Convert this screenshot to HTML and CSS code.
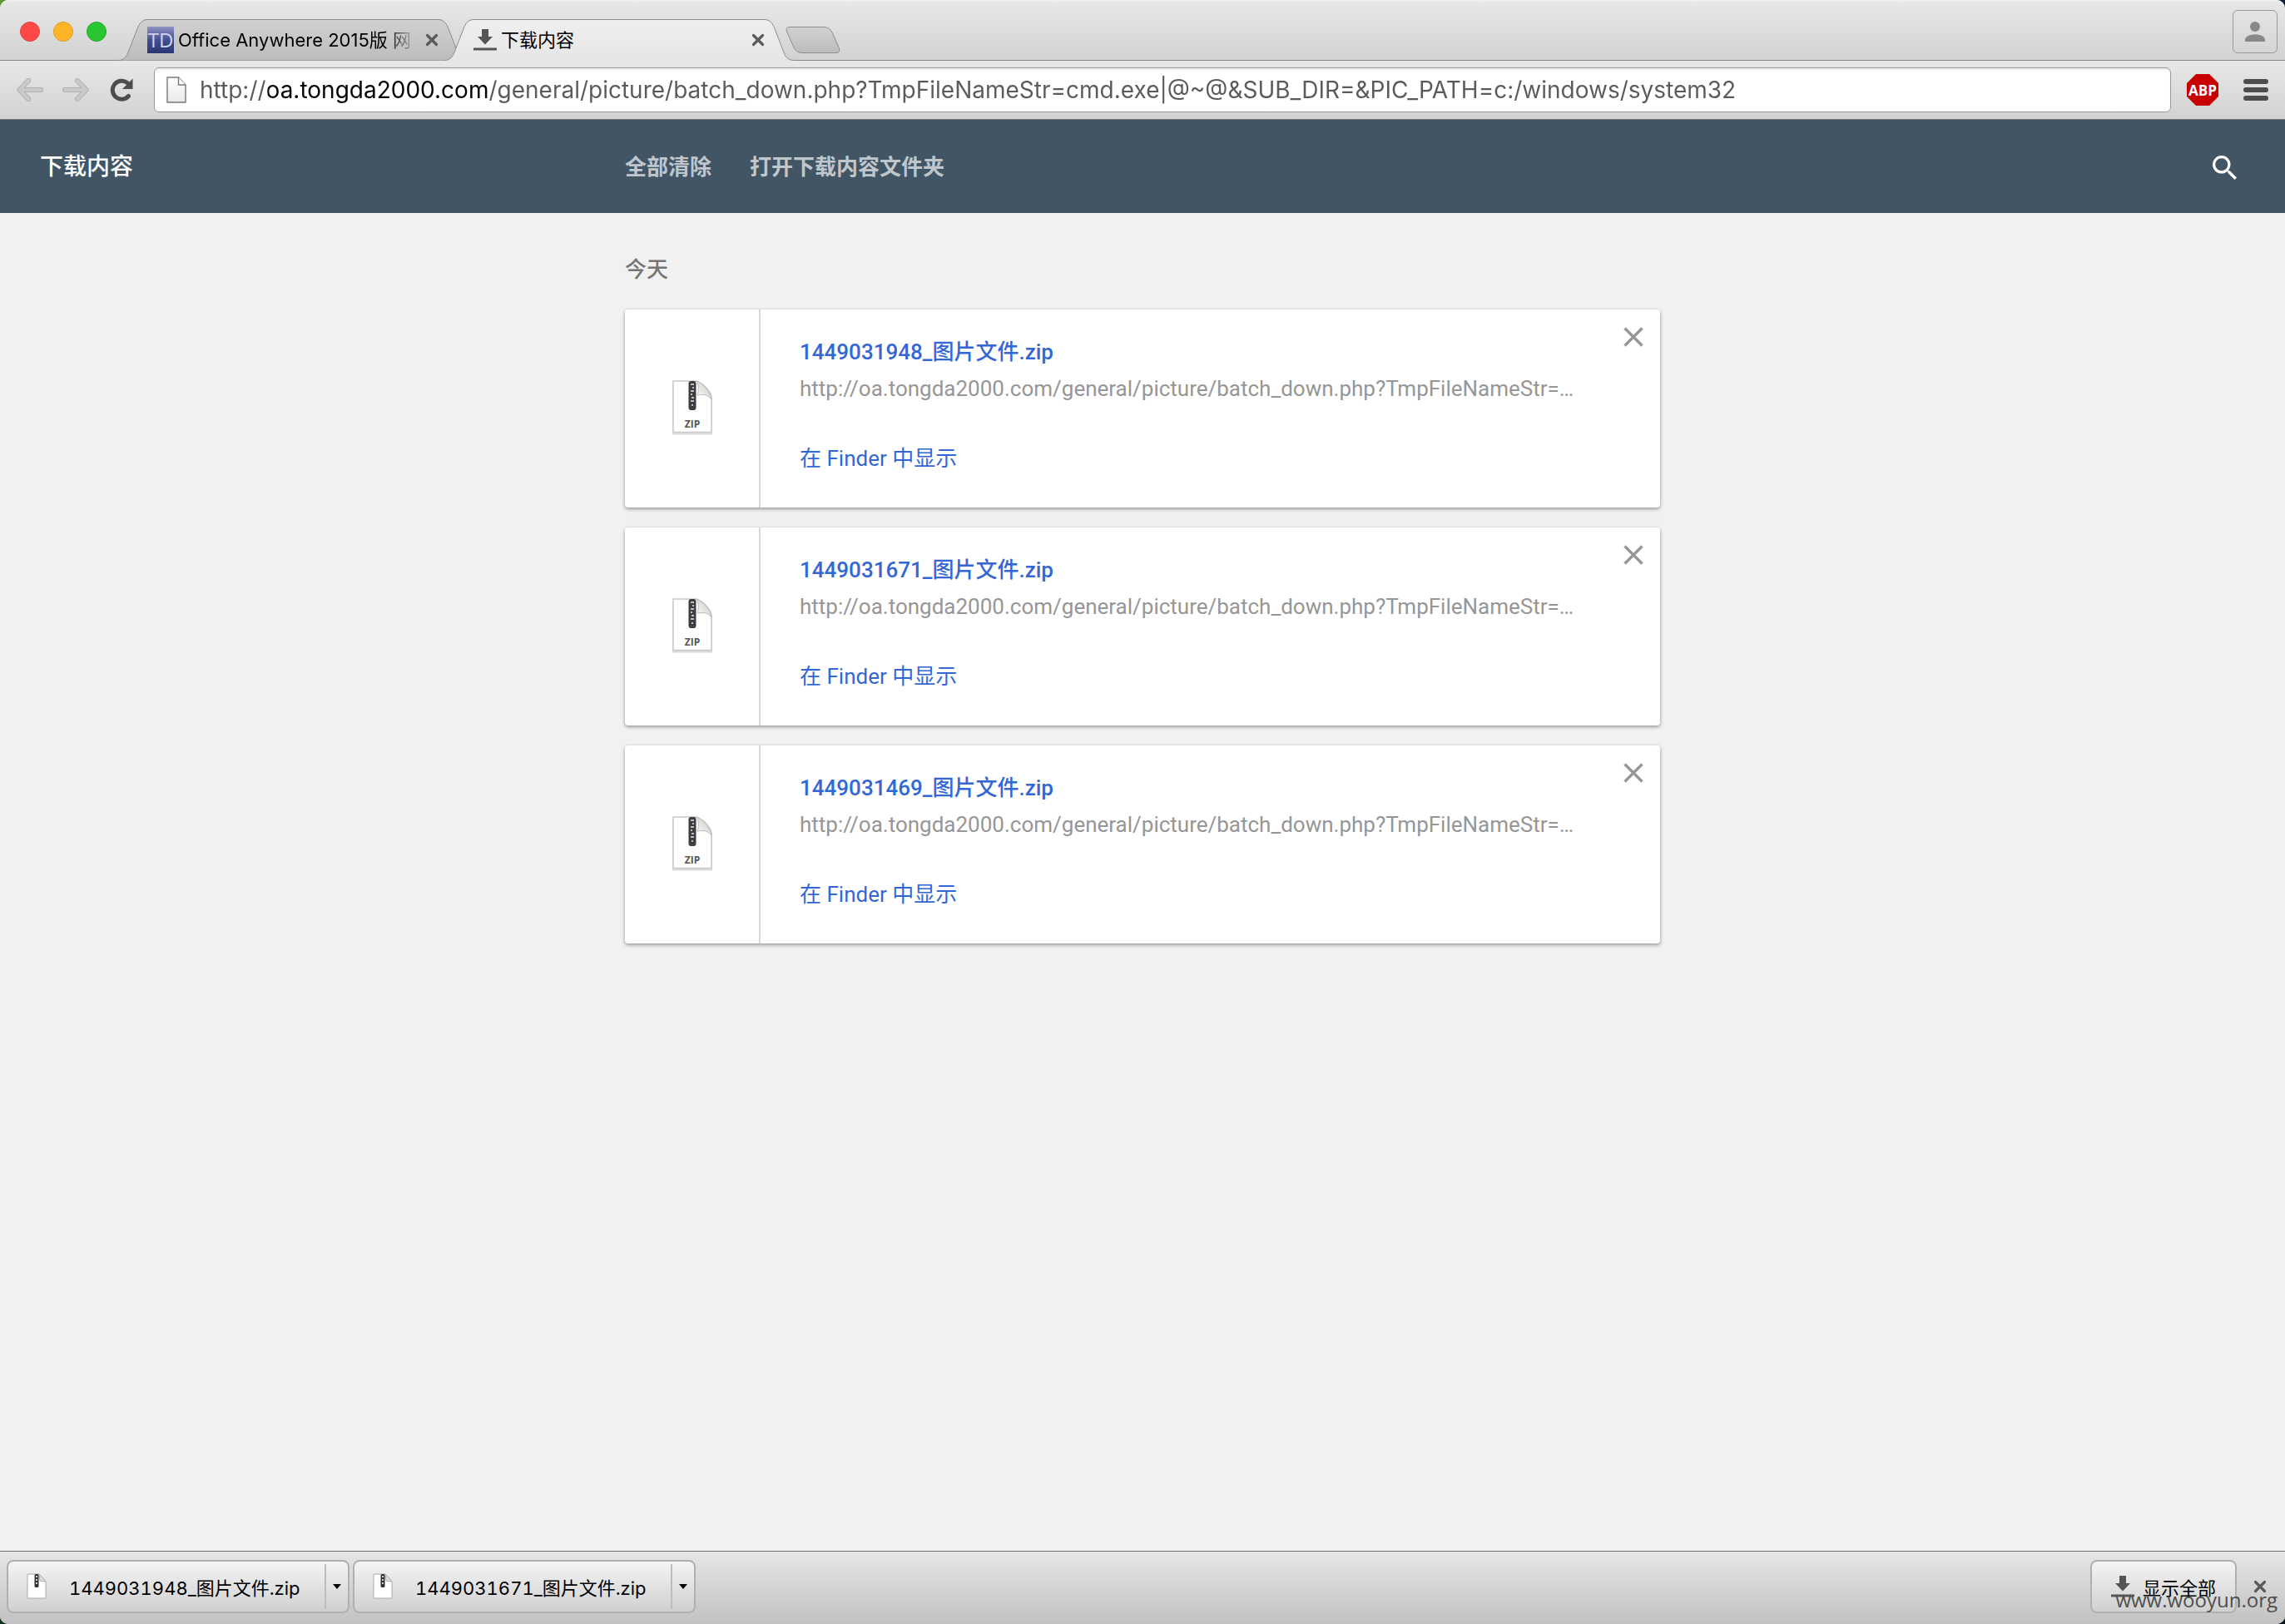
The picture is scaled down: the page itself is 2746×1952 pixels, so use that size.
FILE: index.html
```html
<!DOCTYPE html>
<html lang="zh-CN">
<head>
<meta charset="utf-8">
<title>下载内容</title>
<link rel="stylesheet" href="styles.css">
</head>
<body>
<svg class="defs" aria-hidden="true">
  <defs>
    <linearGradient id="tab-idle" x1="0" y1="0" x2="0" y2="1"><stop offset="0" stop-color="#d1d1d2"/><stop offset="1" stop-color="#bcbcbd"/></linearGradient>
    <linearGradient id="tab-on" x1="0" y1="0" x2="0" y2="1"><stop offset="0" stop-color="#efefef"/><stop offset="1" stop-color="#e6e6e6"/></linearGradient>
    <linearGradient id="paper" x1="0" y1="0" x2="0" y2="1"><stop offset="0" stop-color="#ffffff"/><stop offset="1" stop-color="#e9e9e9"/></linearGradient>
    <linearGradient id="fold" x1="0" y1="1" x2="1" y2="0"><stop offset="0" stop-color="#ffffff"/><stop offset="1" stop-color="#c4c4c4"/></linearGradient>
    <symbol id="close-small" viewBox="0 0 16 16"><path d="M2.500 2.500l11 11M13.500 2.500l-11 11" fill="none" stroke="#5a5a5a" stroke-width="3.200" stroke-linecap="round"/></symbol>
    <symbol id="download" viewBox="0 0 28 26"><path d="M10 0h8v9h5l-9 9.500L5 9h5zM0 22.500h28v3H0z" fill="#555"/></symbol>
    <symbol id="remove" viewBox="0 0 24 24"><path d="M1.500 1.500l21 21M22.500 1.500l-21 21" fill="none" stroke="#969696" stroke-width="3.200"/></symbol>
    <symbol id="zip-file" viewBox="0 0 56 72">
      <path d="M4 6h30l18 17v44.500H4z" fill="#000" opacity=".14"/>
      <path d="M5 3h28c8 3 17 12 18 19v42.500H5z" fill="#fff" stroke="#c9c9c9" stroke-width="1.500"/>
      <path d="M33 3c3 5 3 11 1 17 6-1 13-1 17 5-1-9-10-19-18-22z" fill="url(#fold)" stroke="#bbb"/>
      <rect x="23.500" y="3" width="9" height="35" rx="3" fill="#3b3e42"/>
      <path d="M26 7h4m-2 4h2m-4 4h4m-4 4h2m-1 4h3m-4 4h4m-3 5h2" stroke="#b9c0c6" stroke-width="2" fill="none"/>
      <text class="zip-label" x="28" y="59" text-anchor="middle">ZIP</text>
    </symbol>
    <symbol id="zip-small" viewBox="0 0 26 34">
      <path d="M2 2h14l8 9v20H2z" fill="#fff" stroke="#aaa"/>
      <path d="M16 2l1 8 7 1z" fill="#e2e2e2" stroke="#aaa"/>
      <rect x="10.500" y="2" width="5" height="16" rx="1.500" fill="#333"/>
      <path d="M13 4v12" stroke="#ccc" stroke-dasharray="2 2" stroke-width="2"/>
    </symbol>
  </defs>
</svg>

<div class="window">
  <header class="tabstrip">
    <div class="lights">
      <button class="light light-close" aria-label="关闭"></button>
      <button class="light light-min" aria-label="最小化"></button>
      <button class="light light-max" aria-label="最大化"></button>
    </div>
    <nav class="tabs">
      <div class="tab">
        <svg class="tab-shape" viewBox="0 0 420 50"><path d="M0 49.500C7 49.500 10 45 12 40L24 9Q28 .5 35 .5H385Q392 .5 396 9L408 40Q411 49.500 420 49.500" fill="url(#tab-idle)" stroke="#8d8d8d"/></svg>
        <svg class="favicon" viewBox="0 0 32 32"><defs><linearGradient id="td" x1="0" y1="0" x2="0" y2="1"><stop offset="0" stop-color="#8f93c4"/><stop offset=".5" stop-color="#444f92"/><stop offset="1" stop-color="#2a3672"/></linearGradient></defs><rect width="32" height="32" fill="url(#td)"/><text class="td-label" x="16" y="25" text-anchor="middle">TD</text></svg>
        <a class="tab-title tab-title-fade" href="#">Office Anywhere 2015版 网</a>
        <button class="tab-close" aria-label="关闭标签页"><svg viewBox="0 0 16 16"><use href="#close-small"/></svg></button>
      </div>
      <div class="tab tab-active">
        <svg class="tab-shape" viewBox="0 0 420 50"><path d="M0 50V49.500C7 49.500 10 45 12 40L24 9Q28 .5 35 .5H385Q392 .5 396 9L408 40Q411 49.500 420 49.500V50z" fill="url(#tab-on)"/><path d="M0 49.500C7 49.500 10 45 12 40L24 9Q28 .5 35 .5H385Q392 .5 396 9L408 40Q411 49.500 420 49.500" fill="none" stroke="#8d8d8d"/></svg>
        <svg class="tab-icon" viewBox="0 0 28 26"><use href="#download"/></svg>
        <a class="tab-title" href="#">下载内容</a>
        <button class="tab-close" aria-label="关闭标签页"><svg viewBox="0 0 16 16"><use href="#close-small"/></svg></button>
      </div>
    </nav>
    <button class="new-tab" aria-label="新标签页"><svg viewBox="0 0 66 32"><path d="M5 .5H46Q53 .5 56 7L64.500 26Q66 31.500 61 31.500H20Q13 31.500 10 25L1.500 6Q0 .5 5 .5z" fill="url(#tab-idle)" stroke="#8d8d8d"/></svg></button>
    <button class="profile" aria-label="用户"><svg viewBox="0 0 24 24"><circle cx="12" cy="6" r="6" fill="#888"/><path d="M0 24v-2c0-4 5-6.500 12-6.500s12 2.500 12 6.500v2z" fill="#888"/></svg></button>
  </header>

  <div class="toolbar">
    <button class="nav-btn" aria-label="后退"><svg viewBox="0 0 32 28"><path d="M14 3L3.500 14 14 25M4 14h25" fill="none" stroke="#a9a9a9" stroke-width="6" stroke-linecap="round" stroke-linejoin="round"/><path d="M14 3L3.500 14 14 25M4 14h25" fill="none" stroke="#c9c9c9" stroke-width="4.500" stroke-linecap="round" stroke-linejoin="round"/></svg></button>
    <button class="nav-btn" aria-label="前进"><svg viewBox="0 0 32 28"><path d="M18 3l10.500 11L18 25M28 14H3" fill="none" stroke="#a9a9a9" stroke-width="6" stroke-linecap="round" stroke-linejoin="round"/><path d="M18 3l10.500 11L18 25M28 14H3" fill="none" stroke="#c9c9c9" stroke-width="4.500" stroke-linecap="round" stroke-linejoin="round"/></svg></button>
    <button class="nav-btn" aria-label="重新加载"><svg viewBox="-2 0 32 28"><path d="M22.500 21.500A11 11 0 1 1 21 5.500" fill="none" stroke="#4d4d4d" stroke-width="5" stroke-linecap="round"/><path d="M27.500 .5V13H15z" fill="#4d4d4d"/></svg></button>
    <label class="omnibox">
      <svg class="page-icon" viewBox="0 0 24 32"><path d="M1 1h13.500l8.500 9v21H1z" fill="url(#paper)" stroke="#777" stroke-width="1.400"/><path d="M14.500 1v9H23" fill="#fff" stroke="#777" stroke-width="1.400"/></svg>
      <input class="url" type="text" aria-label="地址" value="http://oa.tongda2000.com/general/picture/batch_down.php?TmpFileNameStr=cmd.exe|@~@&amp;SUB_DIR=&amp;PIC_PATH=c:/windows/system32">
    </label>
    <button class="abp" aria-label="Adblock Plus"><svg viewBox="0 0 38 38"><path d="M11 0h16l11 11v16L27 38H11L0 27V11z" fill="#c70000"/><text class="abp-label" x="19" y="26" text-anchor="middle">ABP</text></svg></button>
    <button class="menu" aria-label="菜单"><svg viewBox="0 0 30 26"><path d="M3 3h24M3 13h24M3 23h24" stroke="#4d4d4d" stroke-width="6" stroke-linecap="round"/></svg></button>
  </div>

  <div class="page-head">
    <h1 class="page-title">下载内容</h1>
    <div class="actions">
      <button class="action">全部清除</button>
      <button class="action">打开下载内容文件夹</button>
    </div>
    <button class="search" aria-label="搜索"><svg viewBox="3 3 17.500 17.500"><path fill="#fff" d="M15.500 14h-.79l-.28-.27A6.471 6.471 0 0 0 16 9.500 6.500 6.500 0 1 0 9.500 16c1.610 0 3.090-.59 4.230-1.570l.27.28v.79l5 4.990L20.490 19l-4.990-5zm-6 0C7.010 14 5 11.990 5 9.500S7.010 5 9.500 5 14 7.010 14 9.500 11.990 14 9.500 14z"/></svg></button>
  </div>

  <main class="content">
    <h2 class="day">今天</h2>
    <ul class="list">
      <li class="card">
        <div class="thumb"><svg viewBox="0 0 56 72"><use href="#zip-file"/></svg></div>
        <div class="info">
          <a class="name" href="#">1449031948_图片文件.zip</a>
          <a class="source" href="#">http://oa.tongda2000.com/general/picture/batch_down.php?TmpFileNameStr=…</a>
          <a class="show" href="#">在 Finder 中显示</a>
        </div>
        <button class="remove" aria-label="从列表中移除"><svg viewBox="0 0 24 24"><use href="#remove"/></svg></button>
      </li>
      <li class="card">
        <div class="thumb"><svg viewBox="0 0 56 72"><use href="#zip-file"/></svg></div>
        <div class="info">
          <a class="name" href="#">1449031671_图片文件.zip</a>
          <a class="source" href="#">http://oa.tongda2000.com/general/picture/batch_down.php?TmpFileNameStr=…</a>
          <a class="show" href="#">在 Finder 中显示</a>
        </div>
        <button class="remove" aria-label="从列表中移除"><svg viewBox="0 0 24 24"><use href="#remove"/></svg></button>
      </li>
      <li class="card">
        <div class="thumb"><svg viewBox="0 0 56 72"><use href="#zip-file"/></svg></div>
        <div class="info">
          <a class="name" href="#">1449031469_图片文件.zip</a>
          <a class="source" href="#">http://oa.tongda2000.com/general/picture/batch_down.php?TmpFileNameStr=…</a>
          <a class="show" href="#">在 Finder 中显示</a>
        </div>
        <button class="remove" aria-label="从列表中移除"><svg viewBox="0 0 24 24"><use href="#remove"/></svg></button>
      </li>
    </ul>
  </main>

  <footer class="shelf">
    <div class="shelf-item">
      <button class="shelf-file"><svg class="shelf-zip" viewBox="0 0 26 34"><use href="#zip-small"/></svg>1449031948_图片文件.zip</button>
      <button class="shelf-more" aria-label="更多操作"><svg viewBox="0 0 10 6"><path d="M0 0h10L5 6z"/></svg></button>
    </div>
    <div class="shelf-item">
      <button class="shelf-file"><svg class="shelf-zip" viewBox="0 0 26 34"><use href="#zip-small"/></svg>1449031671_图片文件.zip</button>
      <button class="shelf-more" aria-label="更多操作"><svg viewBox="0 0 10 6"><path d="M0 0h10L5 6z"/></svg></button>
    </div>
    <button class="show-all"><svg viewBox="0 0 28 26"><use href="#download"/></svg>显示全部</button>
    <button class="shelf-close" aria-label="关闭下载栏"><svg viewBox="0 0 16 16"><use href="#close-small"/></svg></button>
    <span class="watermark">www.wooyun.org</span>
  </footer>
</div>
</body>
</html>
```

FILE: styles.css
```css
* {
  box-sizing: border-box;
}

body {
  margin: 0;
  background: linear-gradient(to bottom, rgba(30, 70, 20, 0) 50%, rgba(0, 20, 20, 0.8) 100%), linear-gradient(to right, #5d9c39 0, #1d3c14 200px, #0c2238 100%);
  font-family: Inter, "Noto Sans CJK SC", sans-serif;
  font-size: 22px;
  color: #000;
}

button {
  display: flex;
  align-items: center;
  justify-content: center;
  flex: none;
  padding: 0;
  border: 0;
  background: none;
  font: inherit;
  color: inherit;
}

a {
  text-decoration: none;
  color: inherit;
}

svg {
  display: block;
  flex: none;
}

.defs {
  position: absolute;
  width: 0;
  height: 0;
}

.window {
  display: flex;
  flex-direction: column;
  min-height: 100vh;
  overflow: hidden;
  border-radius: 10px;
  background: #f1f1f1;
}

/* tab strip */

.tabstrip {
  display: flex;
  align-items: flex-end;
  height: 73px;
  border-bottom: 1px solid #868686;
  background: linear-gradient(#f4f4f4 0, #e7e7e7 3px, #d2d2d2 100%);
}

.lights {
  display: flex;
  gap: 16px;
  width: 142px;
  padding: 0 0 22px 24px;
}

.light {
  width: 24px;
  height: 24px;
  border: 1px solid;
  border-radius: 50%;
}

.light-close {
  background: #fd4a47;
  border-color: #e2403d;
}

.light-min {
  background: #fdb426;
  border-color: #de9c22;
}

.light-max {
  background: #29c631;
  border-color: #21a52a;
}

.tabs {
  display: flex;
  margin-bottom: -1px;
}

.tab {
  position: relative;
  display: flex;
  align-items: center;
  width: 420px;
  height: 50px;
  padding: 0 35px;
}

.tab > * {
  position: relative;
}

.tab > .tab-shape {
  position: absolute;
  inset: 0;
  width: 100%;
  height: 100%;
}

.tab-active {
  margin-left: -28px;
}

.favicon {
  width: 32px;
  height: 32px;
}

.td-label {
  font: 24px "Open Sans", sans-serif;
  fill: #cfd3ec;
}

.tab-icon {
  width: 28px;
  height: 26px;
}

.tab-title {
  flex: 1;
  min-width: 0;
  margin: 0 12px 0 5px;
  white-space: nowrap;
  line-height: 32px;
}

.tab-title-fade {
  -webkit-mask-image: linear-gradient(to right, #000 250px, transparent 286px);
  mask-image: linear-gradient(to right, #000 250px, transparent 286px);
}

.tab-close svg,
.shelf-close svg {
  width: 16px;
  height: 16px;
}

.new-tab {
  margin: 0 auto 8px -10px;
}

.new-tab svg {
  width: 66px;
  height: 32px;
}

.profile {
  width: 54px;
  height: 52px;
  margin: 0 9px 8px 0;
  border: 1px solid #9a9a9a;
  border-radius: 6px;
}

.profile svg {
  width: 24px;
  height: 24px;
}

/* toolbar */

.toolbar {
  display: flex;
  align-items: center;
  height: 71px;
  padding: 0 20px;
  border-bottom: 1px solid #777;
  background: linear-gradient(#e8e8e8, #d2d2d2);
}

.nav-btn {
  margin-right: 23px;
}

.nav-btn svg {
  width: 32px;
  height: 28px;
}

.omnibox {
  display: flex;
  flex: 1;
  align-items: center;
  gap: 16px;
  height: 54px;
  min-width: 0;
  padding: 0 14px;
  border: 1px solid #999;
  border-radius: 6px;
  background: #fff;
  box-shadow: inset 0 2px 1px #eee;
}

.page-icon {
  width: 24px;
  height: 32px;
}

.url {
  flex: 1;
  min-width: 0;
  padding: 0;
  border: 0;
  outline: 0;
  font: 28px/40px Inter, "Noto Sans CJK SC", sans-serif;
  color: transparent;
  background: linear-gradient(to right, #5a5a5a 82px, #000 82px 348px, #5a5a5a 348px);
  -webkit-background-clip: text;
  background-clip: text;
}

.abp {
  margin-left: 19px;
}

.abp svg {
  width: 38px;
  height: 38px;
}

.abp-label {
  font: bold 17px "Open Sans", sans-serif;
  fill: #fff;
}

.menu {
  margin-left: 30px;
}

.menu svg {
  width: 30px;
  height: 26px;
}

/* downloads page */

.page-head {
  display: grid;
  grid-template-columns: 1fr minmax(0, 1244px) 1fr;
  align-items: center;
  height: 112px;
  padding-top: 2px;
  background: #415564;
  font-family: Roboto, "Noto Sans CJK SC", sans-serif;
}

.page-title {
  margin: 0;
  padding-left: 48px;
  font-size: 28px;
  font-weight: 500;
  line-height: 40px;
  color: #fff;
}

.actions {
  display: flex;
  gap: 46px;
}

.action {
  font-size: 26px;
  font-weight: 700;
  line-height: 40px;
  color: #c0c7cc;
}

.search {
  justify-self: end;
  margin-right: 58px;
}

.search svg {
  width: 29px;
  height: 29px;
}

.content {
  flex: 1;
  width: 100%;
  max-width: 1244px;
  margin: 0 auto;
  font-family: Roboto, "Noto Sans CJK SC", sans-serif;
  font-size: 26px;
}

.day {
  margin: 48px 0 28px;
  font-size: 26px;
  font-weight: 500;
  line-height: 40px;
  color: #757575;
}

.list {
  display: flex;
  flex-direction: column;
  gap: 24px;
  margin: 0;
  padding: 0;
  list-style: none;
}

.card {
  position: relative;
  display: flex;
  height: 238px;
  border-radius: 4px;
  background: #fff;
  box-shadow: 0 2px 4px rgba(0, 0, 0, 0.35), 0 0 4px rgba(0, 0, 0, 0.06);
}

.thumb {
  display: flex;
  align-items: center;
  justify-content: center;
  width: 163px;
  border-right: 2px solid #d8d8d8;
}

.thumb svg {
  width: 56px;
  height: 72px;
}

.zip-label {
  font: bold 12px "Open Sans", sans-serif;
  fill: #555;
}

.info {
  display: flex;
  flex: 1;
  flex-direction: column;
  align-items: flex-start;
  min-width: 0;
  padding: 29px 96px 0 47px;
  line-height: 44px;
}

.name {
  font-weight: 500;
  color: #3367d6;
}

.source {
  max-width: 100%;
  overflow: hidden;
  text-overflow: ellipsis;
  white-space: nowrap;
  color: #969696;
}

.show {
  margin-top: 40px;
  color: #3367d6;
}

.remove {
  position: absolute;
  top: 21px;
  right: 20px;
}

.remove svg {
  width: 24px;
  height: 24px;
}

/* download shelf */

.shelf {
  position: relative;
  display: flex;
  align-items: center;
  gap: 4px;
  height: 88px;
  padding: 0 22px 4px 8px;
  border-top: 1px solid #6c6c6c;
  background: linear-gradient(#e6e6e6, #c2c2c2);
}

.shelf-item,
.show-all {
  display: flex;
  height: 64px;
  border: 2px solid #b0b0b0;
  border-radius: 8px;
  background: linear-gradient(#f4f4f4, #d0d0d0);
}

.shelf-item {
  width: 412px;
}

.shelf-file {
  flex: 1;
  justify-content: flex-start;
  gap: 26px;
  padding-left: 21px;
  font-variant-numeric: tabular-nums;
}

.shelf-zip {
  width: 26px;
  height: 34px;
}

.shelf-more {
  width: 28px;
  margin: 3px 0;
  border-left: 2px solid #bdbdbd;
}

.shelf-more svg {
  width: 10px;
  height: 6px;
}

.show-all {
  gap: 10px;
  width: 176px;
  margin-left: auto;
}

.show-all svg {
  width: 28px;
  height: 26px;
}

.shelf-close {
  margin-left: 16px;
}

.watermark {
  position: absolute;
  right: 9px;
  bottom: 12px;
  font: 24px/34px "Open Sans", sans-serif;
  color: #4f4f4f;
}
```
